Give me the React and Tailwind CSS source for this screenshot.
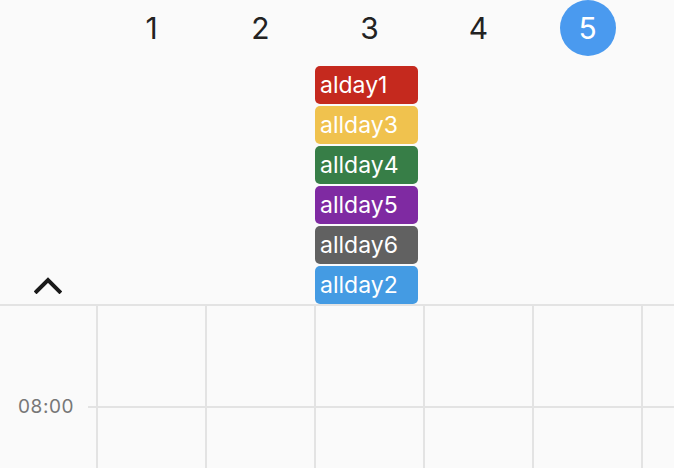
import React from "react";

const events = [
  { label: "alday1", cls: "bg-[#c5291e]" },
  { label: "allday3", cls: "bg-[#f0c24e]" },
  { label: "allday4", cls: "bg-[#377e47]" },
  { label: "allday5", cls: "bg-[#7f2aa2]" },
  { label: "allday6", cls: "bg-[#616161]" },
  { label: "allday2", cls: "bg-[#449be3]" },
];

const days = ["1", "2", "3", "4", "5", ""];

export default function App() {
  return (
    <div
      className="w-[674px] h-[468px] overflow-hidden bg-[#fafafa] text-[#222]"
      style={{ fontFamily: "Inter, 'Noto Sans', sans-serif" }}
    >
      {/* header */}
      <div className="flex h-[56px] pl-[97px]">
        {days.map((d, i) => (
          <div key={i} className="w-[109px] shrink-0 flex items-center justify-center">
            {d === "5" ? (
              <div className="w-[56px] h-[56px] rounded-full bg-[#4a9aef] text-white flex items-center justify-center text-[30px] leading-none">
                5
              </div>
            ) : (
              <span className="text-[30px] leading-none">{d}</span>
            )}
          </div>
        ))}
      </div>

      {/* all-day area */}
      <div className="flex h-[248px]">
        <div className="w-[97px] shrink-0 flex items-end justify-center pb-[10px] pr-[2px]">
          <svg width="28" height="18" viewBox="0 0 28 18" fill="none">
            <path d="M2.5 15.5 L14 4 L25.5 15.5" stroke="#1a1a1a" strokeWidth="4" strokeLinecap="square" />
          </svg>
        </div>
        <div className="w-[218px] shrink-0" />
        <div className="w-[109px] shrink-0 pt-[10px] flex flex-col gap-[2px]">
          {events.map((e) => (
            <div
              key={e.label}
              className={`${e.cls} w-[103px] h-[38px] rounded-[5px] text-white text-[23px] leading-none pl-[5px] pt-[1px] flex items-center`}
            >
              {e.label}
            </div>
          ))}
        </div>
      </div>

      {/* time grid */}
      <div className="border-t-2 border-[#e3e3e3]">
        <div className="flex h-[100px] pl-[96px]">
          {days.map((d, i) => (
            <div key={i} className="w-[109px] shrink-0 border-l-2 border-[#e3e3e3]" />
          ))}
        </div>
        <div className="relative pl-[88px]">
          <span className="absolute left-[18px] top-0 -translate-y-1/2 text-[19px] leading-none text-[#777] tracking-[0.6px]">
            08:00
          </span>
          <div className="flex h-[70px] border-t-2 border-[#e3e3e3] pl-[8px]">
            {days.map((d, i) => (
              <div key={i} className="w-[109px] shrink-0 border-l-2 border-[#e3e3e3]" />
            ))}
          </div>
        </div>
      </div>
    </div>
  );
}
